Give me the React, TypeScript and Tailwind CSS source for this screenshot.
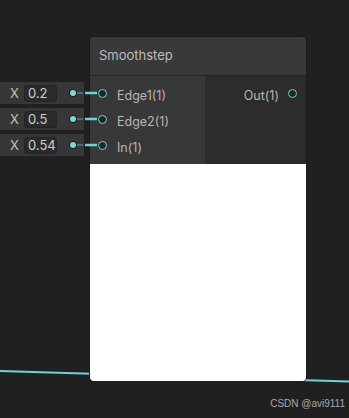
const fields = ["0.2", "0.5", "0.54"];
const inputs = ["Edge1(1)", "Edge2(1)", "In(1)"];

function Port() {
  return <span className="block w-[9px] h-[9px] rounded-full border-[1.5px] border-[#6fd3d6] bg-[#252525]" />;
}

export default function App() {
  return (
    <div className="relative w-[349px] h-[418px] bg-[#202020] overflow-hidden font-['Inter',sans-serif]">
      {/* wire passing behind the node */}
      <svg className="absolute inset-0" width="349" height="418">
        <line x1="0" y1="371" x2="349" y2="381.5" stroke="#6fd3d6" strokeWidth="2" />
      </svg>

      {/* inline value fields */}
      <div className="absolute left-0 top-[82px] flex flex-col gap-[4px]">
        {fields.map((v) => (
          <div key={v} className="relative w-[84px] h-[22px] bg-[#373737] flex items-center">
            <span className="w-[24px] pl-[10px] text-[13px] text-[#c4c4c4] leading-none">X</span>
            <div className="w-[33px] h-[17px] rounded-[3px] bg-[#2a2a2a] border border-[#232323] flex items-center pl-[3px] text-[13px] text-[#cecece] leading-none">
              {v}
            </div>
            <span className="ml-[13px] w-[6px] h-[6px] rounded-full bg-[#7fd9dc] ring-1 ring-[#1e1e1e]" />
            <span className="ml-[1px] w-[6px] h-[2px] bg-[#4d6f70]" />
          </div>
        ))}
      </div>

      {/* node */}
      <div className="absolute left-[89px] top-[36px] w-[218px] rounded-[5px] overflow-hidden border border-[#1c1c1c]">
        <div className="h-[39px] bg-[#393939] border-b border-[#262626] flex items-center pl-[9px] text-[13px] text-[#bdbdbd]">
          Smoothstep
        </div>
        <div className="flex h-[88px]">
          <div className="w-[115px] bg-[#383838] pt-[7px] flex flex-col">
            {inputs.map((t) => (
              <div key={t} className="h-[26px] flex items-center">
                <span className="ml-[8px] relative -top-[3px]">
                  <Port />
                </span>
                <span className="ml-[10px] text-[12.5px] text-[#b6b6b6]">{t}</span>
              </div>
            ))}
          </div>
          <div className="flex-1 bg-[#2c2c2c] pt-[7px] border-r border-[#262626]">
            <div className="h-[26px] flex items-center justify-end pr-[8px]">
              <span className="text-[12.5px] text-[#b6b6b6]">Out(1)</span>
              <span className="ml-[9px] relative -top-[3px]">
                <Port />
              </span>
            </div>
          </div>
        </div>
        <div className="h-[217px] bg-white" />
      </div>

      {/* bright connector segments into the ports */}
      <svg className="absolute left-0 top-0" width="120" height="160">
        {[93, 119, 145].map((y) => (
          <line key={y} x1="85" y1={y} x2="97" y2={y} stroke="#6fd3d6" strokeWidth="2.5" />
        ))}
      </svg>

      <div className="absolute right-[4px] bottom-[7px] text-[10px] text-[#a8a8a8] font-['Liberation_Sans',sans-serif]">
        CSDN @avi9111
      </div>
    </div>
  );
}
